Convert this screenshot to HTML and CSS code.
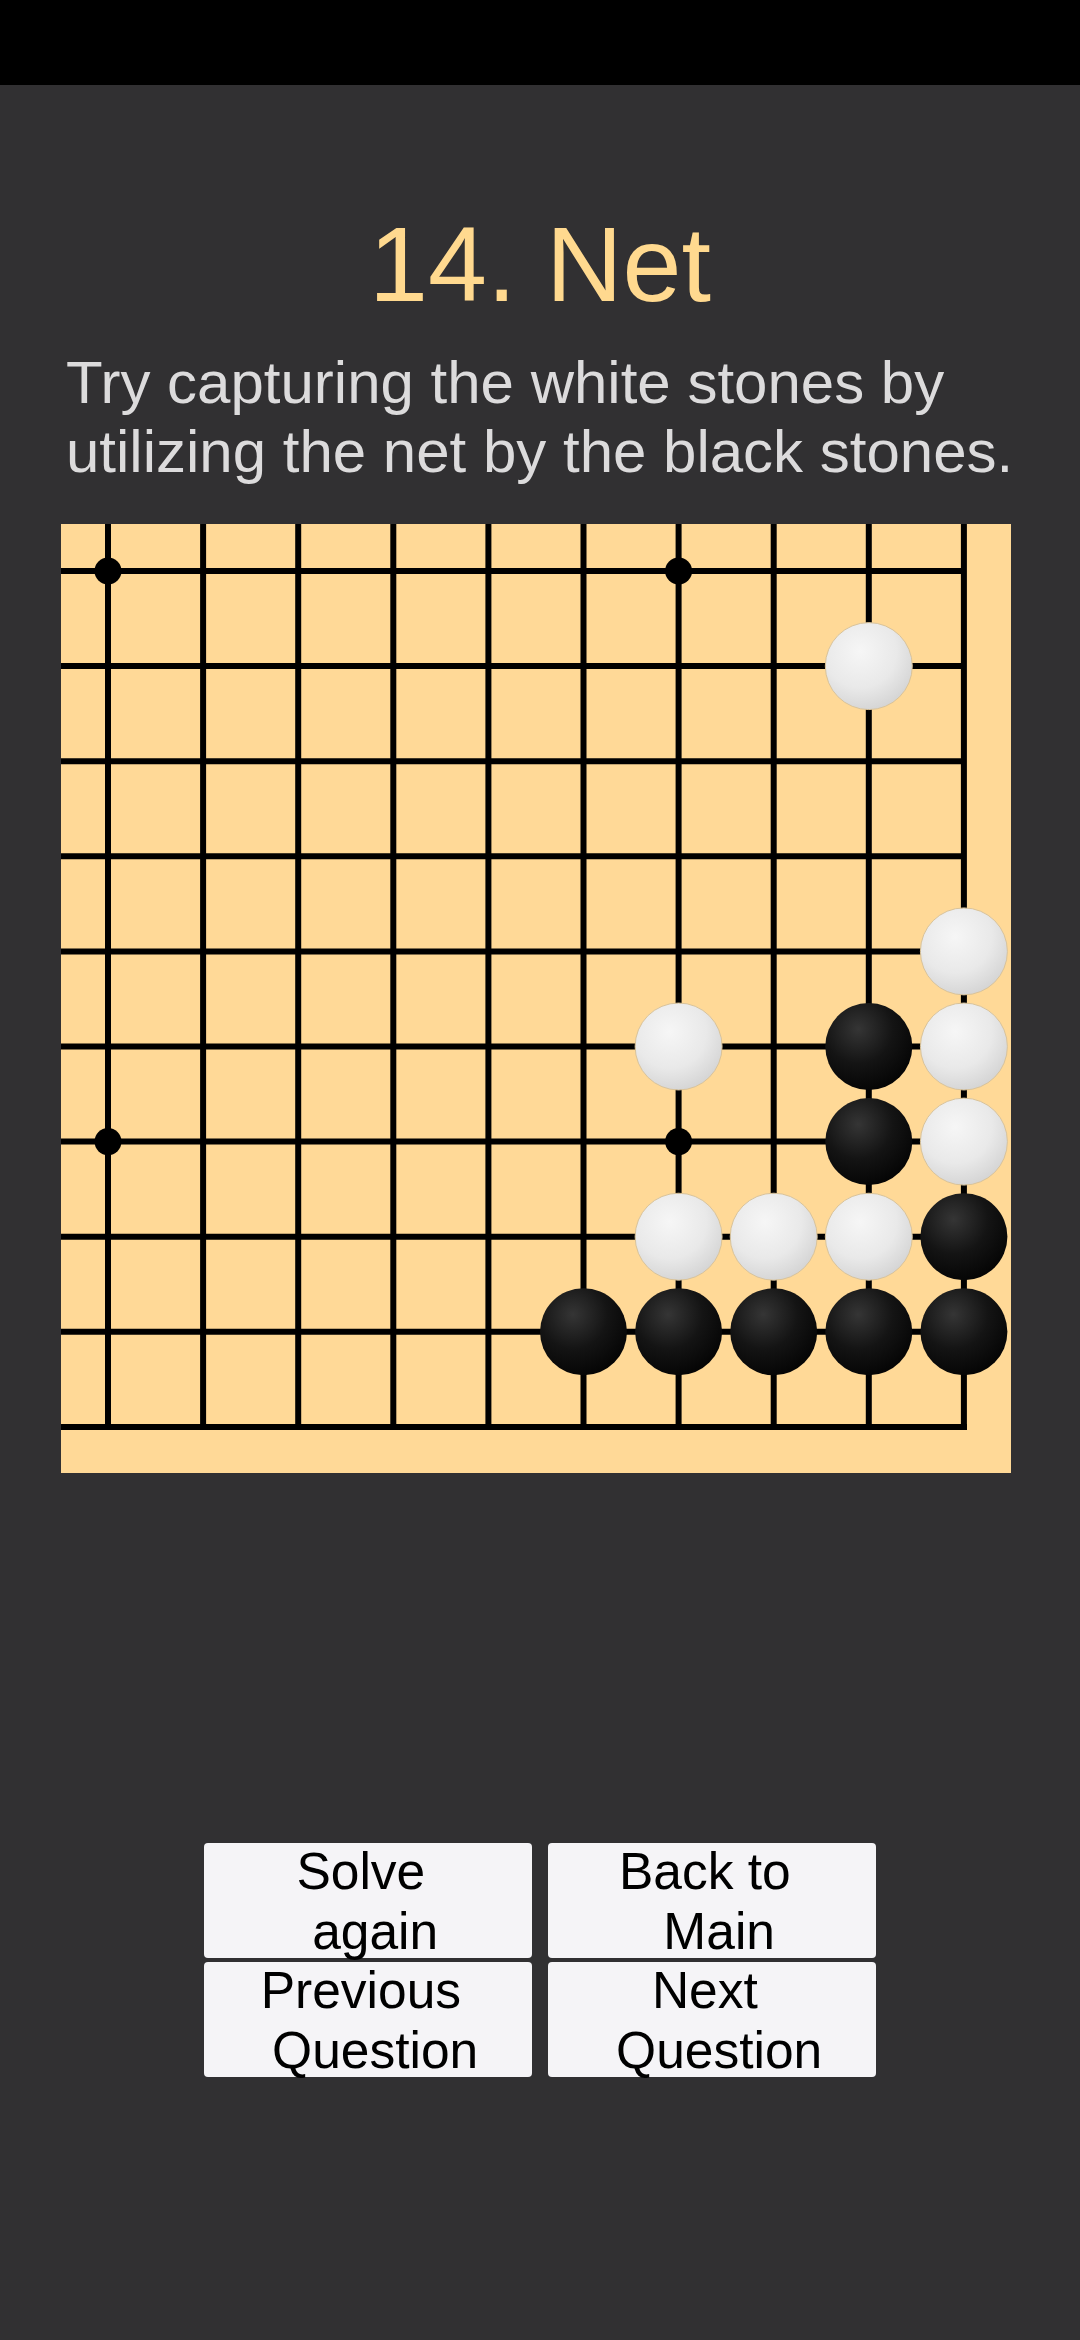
FILE: index.html
```html
<!DOCTYPE html>
<html lang="en">
<head>
<meta charset="utf-8">
<title>14. Net</title>
<link rel="stylesheet" href="styles.css">
</head>
<body>
<div class="statusbar"></div>
<main class="screen">
  <h1 class="title">14. Net</h1>
  <p class="desc">Try capturing the white stones by utilizing the net by the black stones.</p>
  <div class="board">
    <svg width="950" height="950" viewBox="0 0 950 950" xmlns="http://www.w3.org/2000/svg">
      <defs>
        <radialGradient id="gw" cx="0.4" cy="0.33" r="0.7">
          <stop offset="0" stop-color="#f6f6f6"/>
          <stop offset="0.6" stop-color="#e9e9e9"/>
          <stop offset="1" stop-color="#d4d4d4"/>
        </radialGradient>
        <radialGradient id="gb" cx="0.38" cy="0.3" r="0.72">
          <stop offset="0" stop-color="#353535"/>
          <stop offset="0.55" stop-color="#141414"/>
          <stop offset="1" stop-color="#050505"/>
        </radialGradient>
      </defs>
      <g stroke="#000" stroke-width="6" fill="none">
        <line x1="47" y1="0" x2="47" y2="903"/>
        <line x1="142.1" y1="0" x2="142.1" y2="903"/>
        <line x1="237.2" y1="0" x2="237.2" y2="903"/>
        <line x1="332.3" y1="0" x2="332.3" y2="903"/>
        <line x1="427.4" y1="0" x2="427.4" y2="903"/>
        <line x1="522.5" y1="0" x2="522.5" y2="903"/>
        <line x1="617.6" y1="0" x2="617.6" y2="903"/>
        <line x1="712.7" y1="0" x2="712.7" y2="903"/>
        <line x1="807.8" y1="0" x2="807.8" y2="903"/>
        <line x1="902.9" y1="0" x2="902.9" y2="905.9"/>
        <line x1="0" y1="47" x2="902.9" y2="47"/>
        <line x1="0" y1="142.1" x2="902.9" y2="142.1"/>
        <line x1="0" y1="237.2" x2="902.9" y2="237.2"/>
        <line x1="0" y1="332.3" x2="902.9" y2="332.3"/>
        <line x1="0" y1="427.4" x2="902.9" y2="427.4"/>
        <line x1="0" y1="522.5" x2="902.9" y2="522.5"/>
        <line x1="0" y1="617.6" x2="902.9" y2="617.6"/>
        <line x1="0" y1="712.7" x2="902.9" y2="712.7"/>
        <line x1="0" y1="807.8" x2="902.9" y2="807.8"/>
        <line x1="0" y1="902.9" x2="905.9" y2="902.9"/>
      </g>
      <g fill="#000">
        <circle cx="47" cy="47" r="13.5"/>
        <circle cx="617.6" cy="47" r="13.5"/>
        <circle cx="47" cy="617.6" r="13.5"/>
        <circle cx="617.6" cy="617.6" r="13.5"/>
      </g>
      <g fill="url(#gw)" stroke="#d9c39a" stroke-width="1">
        <circle cx="807.8" cy="142.1" r="43.5"/>
        <circle cx="902.9" cy="427.4" r="43.5"/>
        <circle cx="617.6" cy="522.5" r="43.5"/>
        <circle cx="902.9" cy="522.5" r="43.5"/>
        <circle cx="902.9" cy="617.6" r="43.5"/>
        <circle cx="617.6" cy="712.7" r="43.5"/>
        <circle cx="712.7" cy="712.7" r="43.5"/>
        <circle cx="807.8" cy="712.7" r="43.5"/>
      </g>
      <g fill="url(#gb)">
        <circle cx="807.8" cy="522.5" r="43.5"/>
        <circle cx="807.8" cy="617.6" r="43.5"/>
        <circle cx="902.9" cy="712.7" r="43.5"/>
        <circle cx="522.5" cy="807.8" r="43.5"/>
        <circle cx="617.6" cy="807.8" r="43.5"/>
        <circle cx="712.7" cy="807.8" r="43.5"/>
        <circle cx="807.8" cy="807.8" r="43.5"/>
        <circle cx="902.9" cy="807.8" r="43.5"/>
      </g>
    </svg>
  </div>
  <div class="buttons">
    <button class="btn"><span class="l1">Solve&nbsp;</span><span class="l2">&nbsp;again</span></button>
    <button class="btn"><span class="l1">Back to&nbsp;</span><span class="l2">&nbsp;Main</span></button>
    <button class="btn"><span class="l1">Previous&nbsp;</span><span class="l2">&nbsp;Question</span></button>
    <button class="btn"><span class="l1">Next&nbsp;</span><span class="l2">&nbsp;Question</span></button>
  </div>
</main>
</body>
</html>
```
FILE: styles.css
```css
* { box-sizing: border-box; }
html, body {
  margin: 0;
  padding: 0;
  width: 1080px;
  height: 2340px;
  background: #313032;
  overflow: hidden;
  font-family: "Liberation Sans", Arial, sans-serif;
}
.statusbar {
  height: 85px;
  background: #000;
}
.screen {
  display: flex;
  flex-direction: column;
  align-items: center;
  padding-top: 120px;
}
.title {
  margin: 0;
  font-weight: normal;
  font-size: 106px;
  line-height: 118px;
  color: #ffd98f;
  text-align: center;
}
.desc {
  margin: 25px 0 0 0;
  align-self: stretch;
  padding: 0 30px 0 66px;
  font-size: 60px;
  line-height: 69px;
  color: #dcdbdc;
}
.board {
  margin-top: 38px;
  width: 950px;
  height: 949px;
  background: #ffd997;
  overflow: hidden;
  align-self: flex-start;
  margin-left: 61px;
}
.board svg { display: block; }
.buttons {
  margin-top: 370px;
  display: grid;
  grid-template-columns: 328px 328px;
  grid-auto-rows: 115px;
  column-gap: 16px;
  row-gap: 4px;
}
.btn {
  border: none;
  border-radius: 4px;
  background: #f5f4f7;
  color: #000;
  font-family: "Liberation Sans", Arial, sans-serif;
  font-size: 51.5px;
  line-height: 60px;
  padding: 0;
  margin: 0;
  display: flex;
  flex-direction: column;
  align-items: center;
  justify-content: center;
  overflow: visible;
  white-space: nowrap;
}
.btn span { display: block; height: 60px; }
```
